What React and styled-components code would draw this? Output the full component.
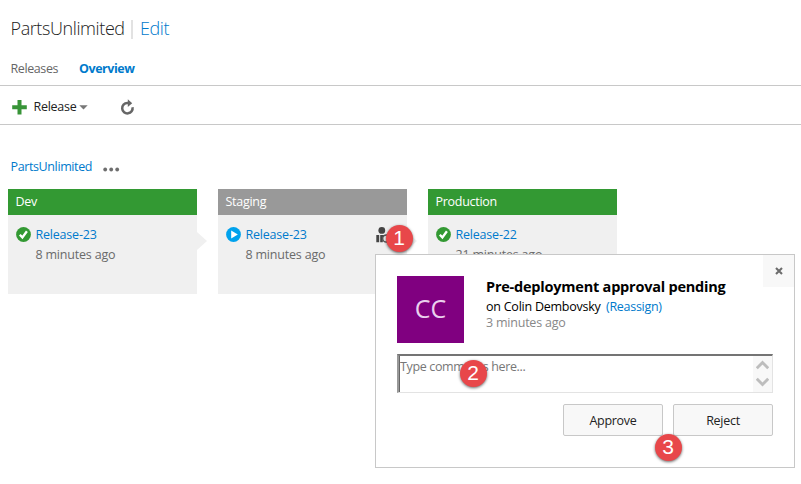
import React from "react";
import styled, { createGlobalStyle } from "styled-components";

const GlobalStyle = createGlobalStyle`
  * { box-sizing: border-box; }
  html, body { margin: 0; padding: 0; background: #fff; overflow: hidden; }
  body { font-family: "Open Sans", "Noto Sans", sans-serif; font-size: 12.5px; color: #222; }
`;

const Page = styled.div`
  position: relative;
  width: 801px;
  height: 484px;
  overflow: hidden;
`;

const Text = styled.span`
  display: block;
  white-space: nowrap;
  line-height: 20px;
  font-size: ${(p) => p.$size || 12.5}px;
  font-weight: ${(p) => p.$weight || 400};
  color: ${(p) => p.$color || "#222"};
  letter-spacing: ${(p) => p.$track ?? -0.28}px;
`;

const TitleBar = styled.header`
  display: flex;
  align-items: center;
  height: 56px;
  padding: 0 0 1px 10.5px;
`;

const TitleDivider = styled.span`
  width: 2px;
  height: 19px;
  background: #e2e2e2;
  margin: 3px 7px 0 6px;
`;

const TitleName = styled.div`
  width: 114.5px;
`;

const Tabs = styled.nav`
  display: flex;
  height: 30px;
  padding: 3px 0 0 10.5px;
  border-bottom: 1px solid #c8c8c8;
`;

const Tab = styled.div`
  width: 68.5px;
`;

const Toolbar = styled.div`
  display: flex;
  align-items: center;
  height: 39px;
  padding: 4px 0 0 11.5px;
  border-bottom: 1px solid #c8c8c8;
  svg { display: block; flex: none; }
`;

const ReleaseLabel = styled.div`
  width: 45px;
  margin-left: 7px;
  padding-top: 1px;
  height: 22px;
`;

const Refresh = styled.div`
  margin-left: 32.5px;
`;

const DefinitionRow = styled.div`
  display: flex;
  height: 64px;
  padding: 32px 0 0 10.5px;
  svg { display: block; margin: 10px 0 0 11px; }
`;

const DefinitionName = styled.div`
  width: 81.5px;
`;

const Environments = styled.main`
  display: flex;
  gap: 21px;
  padding-left: 8px;
`;

const Card = styled.section`
  position: relative;
  width: 189px;
  height: 105px;
  background: #f0f0f0;
`;

const CardHeader = styled.div`
  height: 26px;
  padding: 3px 7.5px;
  background: ${(p) => p.$color};
`;

const CardBody = styled.div`
  display: grid;
  grid-template-columns: 19.5px 1fr 16px;
  grid-template-rows: 20px 20px;
  padding: 10px 15px 0 8px;
  svg { display: block; margin-top: 2px; }
`;

const CardTime = styled.div`
  grid-column: 2;
`;

const FlowArrow = styled.div`
  position: absolute;
  left: 189px;
  top: 43px;
  width: 10px;
  height: 18px;
  background: #f0f0f0;
  clip-path: polygon(0 0, 100% 50%, 0 100%);
`;

const Popup = styled.div`
  position: absolute;
  left: 375px;
  top: 254px;
  width: 420px;
  height: 214px;
  padding: 21px;
  background: #fff;
  border: 1px solid #c8c8c8;
`;

const CloseButton = styled.button`
  position: absolute;
  right: 0;
  top: 0;
  width: 31px;
  height: 32px;
  display: flex;
  align-items: center;
  justify-content: center;
  padding: 0 0 1px;
  border: 0;
  background: #f8f8f8;
`;

const Summary = styled.div`
  display: flex;
  gap: 22px;
`;

const Avatar = styled.div`
  width: 67px;
  height: 67px;
  display: flex;
  align-items: center;
  justify-content: center;
  padding-bottom: 3px;
  background: #800080;
`;

const Details = styled.div`
  display: flex;
  flex-direction: column;
  padding-top: 1px;
`;

const Heading = styled.div`
  height: 20px;
`;

const Assignee = styled.div`
  display: flex;
  height: 16px;
`;

const AssigneeName = styled.div`
  width: 120px;
`;

const CommentBox = styled.div`
  display: flex;
  justify-content: space-between;
  width: 376px;
  height: 39px;
  margin-top: 11px;
  padding-left: 1px;
  border-style: solid;
  border-width: 2px 1px 1px 2px;
  border-color: #747474 #e3e3e3 #e3e3e3 #999;
  box-shadow: inset 1px 0 0 #666;
`;

const Scrollbar = styled.div`
  width: 19px;
  display: flex;
  flex-direction: column;
  align-items: center;
  justify-content: space-between;
  padding: 4px 1px 5px 0;
  background: #f8f8f8;
`;

const Placeholder = styled.div`
  padding-top: 1px;
`;

const Actions = styled.div`
  display: flex;
  justify-content: flex-end;
  gap: 10px;
  width: 376px;
  margin-top: 11px;
`;

const ActionButton = styled.button`
  width: 100px;
  height: 32px;
  display: flex;
  align-items: center;
  justify-content: center;
  padding: 2px 0 0;
  font-family: inherit;
  background: #f8f8f8;
  border: 1px solid #c8c8c8;
  border-radius: 2px;
`;

const Badge = styled.div`
  position: absolute;
  left: ${(p) => p.$x}px;
  top: ${(p) => p.$y}px;
  width: 27px;
  height: 27px;
  border-radius: 50%;
  background: #e8474a;
  box-shadow: 0 1px 3px rgba(0, 0, 0, 0.6);
  color: #fff;
  font-family: "Liberation Sans", Arial, sans-serif;
  font-size: 21px;
  line-height: 26px;
  text-align: center;
`;

const LINK = "#007acc";
const GREY = "#6a6a6a";

const PlusIcon = () => (
  <svg width="15" height="15" viewBox="0 0 15 15">
    <path d="M5.5 0h4v5.3h5.3v4H9.5v5.3h-4V9.3H0.2v-4h5.3z" fill="#389438" />
  </svg>
);

const CaretIcon = () => (
  <svg width="9" height="5" viewBox="0 0 9 5">
    <path d="M0.3 0.3h8.4L4.5 4.6z" fill="#777" />
  </svg>
);

const RefreshIcon = () => (
  <svg width="15" height="16" viewBox="0 0 15 16">
    <path d="M9 4H7.3A5.2 5.2 0 1 0 12.5 8.2" fill="none" stroke="#666" strokeWidth="2.5" />
    <path d="M7.8 0.3L12.2 4.2L7.8 8z" fill="#666" />
  </svg>
);

const MoreIcon = () => (
  <svg width="17" height="5" viewBox="0 0 17 5">
    {[2.2, 8.2, 14.2].map((x) => (
      <circle key={x} cx={x} cy="2.5" r="1.9" fill="#6e6e6e" />
    ))}
  </svg>
);

const CheckIcon = () => (
  <svg width="15" height="15" viewBox="0 0 15 15">
    <circle cx="7.5" cy="7.5" r="7.4" fill="#339933" />
    <path d="M3.8 7.7L6.4 10.4L10.9 4.3" fill="none" stroke="#fff" strokeWidth="2.3" />
  </svg>
);

const PlayIcon = () => (
  <svg width="15" height="15" viewBox="0 0 15 15">
    <circle cx="7.5" cy="7.5" r="7.4" fill="#00a2ed" />
    <path d="M5.2 3.4L11.8 7.5L5.2 11.6z" fill="#fff" />
  </svg>
);

const ApproverIcon = () => (
  <svg width="16" height="16" viewBox="0 0 16 16">
    <circle cx="5.8" cy="3.4" r="3.4" fill="#444" />
    <path d="M0.3 8h2.9v7.2H0.3zM4.2 8h5v2L6.8 12v3.2H4.2z" fill="#444" />
    <circle cx="10.3" cy="11.5" r="3.6" fill="#f0f0f0" stroke="#555" strokeWidth="1.5" />
  </svg>
);

const CloseIcon = () => (
  <svg width="8" height="8" viewBox="0 0 8 8">
    <path d="M1 1L7 7M7 1L1 7" stroke="#6c6c6c" strokeWidth="2.1" />
  </svg>
);

const Chevron = ({ up }) => (
  <svg width="13" height="10" viewBox="0 0 12 9">
    <path d={up ? "M0.7 7.5L6 2.2L11.3 7.5" : "M0.7 1.5L6 6.8L11.3 1.5"} fill="none" stroke="#bdbdbd" strokeWidth="2.7" />
  </svg>
);

function Environment({ name, color, icon, release, time, approver, arrow }) {
  return (
    <Card>
      <CardHeader $color={color}>
        <Text $color="#fff">{name}</Text>
      </CardHeader>
      <CardBody>
        {icon}
        <Text $color={LINK} $track={-0.2}>{release}</Text>
        {approver ? <ApproverIcon /> : <span />}
        <CardTime>
          <Text $color={GREY} $track={-0.2}>{time}</Text>
        </CardTime>
      </CardBody>
      {arrow && <FlowArrow />}
    </Card>
  );
}

export default function App() {
  return (
    <Page>
      <GlobalStyle />
      <TitleBar>
        <TitleName>
          <Text $size={18} $weight={300} $track={-0.4}>PartsUnlimited</Text>
        </TitleName>
        <TitleDivider />
        <Text $size={18} $weight={300} $color={LINK} $track={-0.4}>Edit</Text>
      </TitleBar>
      <Tabs>
        <Tab>
          <Text $color="#666" $track={-0.4}>Releases</Text>
        </Tab>
        <Text $color={LINK} $weight={700} $track={-0.45}>Overview</Text>
      </Tabs>
      <Toolbar>
        <PlusIcon />
        <ReleaseLabel>
          <Text>Release</Text>
        </ReleaseLabel>
        <CaretIcon />
        <Refresh>
          <RefreshIcon />
        </Refresh>
      </Toolbar>
      <DefinitionRow>
        <DefinitionName>
          <Text $color={LINK} $track={-0.38}>PartsUnlimited</Text>
        </DefinitionName>
        <MoreIcon />
      </DefinitionRow>
      <Environments>
        <Environment name="Dev" color="#339933" icon={<CheckIcon />} release="Release-23" time="8 minutes ago" arrow />
        <Environment name="Staging" color="#999999" icon={<PlayIcon />} release="Release-23" time="8 minutes ago" approver arrow />
        <Environment name="Production" color="#339933" icon={<CheckIcon />} release="Release-22" time="21 minutes ago" />
      </Environments>

      <Popup>
        <CloseButton aria-label="Close">
          <CloseIcon />
        </CloseButton>
        <Summary>
          <Avatar>
            <Text $size={25} $color="#ead0ee" $track={0}>CC</Text>
          </Avatar>
          <Details>
            <Heading>
              <Text $size={14.5} $weight={700} $color="#000" $track={-0.22}>Pre-deployment approval pending</Text>
            </Heading>
            <Assignee>
              <AssigneeName>
                <Text $color="#000" $track={-0.24}>on Colin Dembovsky</Text>
              </AssigneeName>
              <Text $color={LINK}>(Reassign)</Text>
            </Assignee>
            <Text $color="#888" $track={-0.22}>3 minutes ago</Text>
          </Details>
        </Summary>
        <CommentBox>
          <Placeholder>
            <Text $color="#777" $track={-0.35}>Type comments here...</Text>
          </Placeholder>
          <Scrollbar>
            <Chevron up />
            <Chevron />
          </Scrollbar>
        </CommentBox>
        <Actions>
          <ActionButton>
            <Text>Approve</Text>
          </ActionButton>
          <ActionButton>
            <Text>Reject</Text>
          </ActionButton>
        </Actions>
      </Popup>

      <Badge $x={385.5} $y={225}>1</Badge>
      <Badge $x={459.5} $y={360}>2</Badge>
      <Badge $x={654.5} $y={434}>3</Badge>
    </Page>
  );
}
